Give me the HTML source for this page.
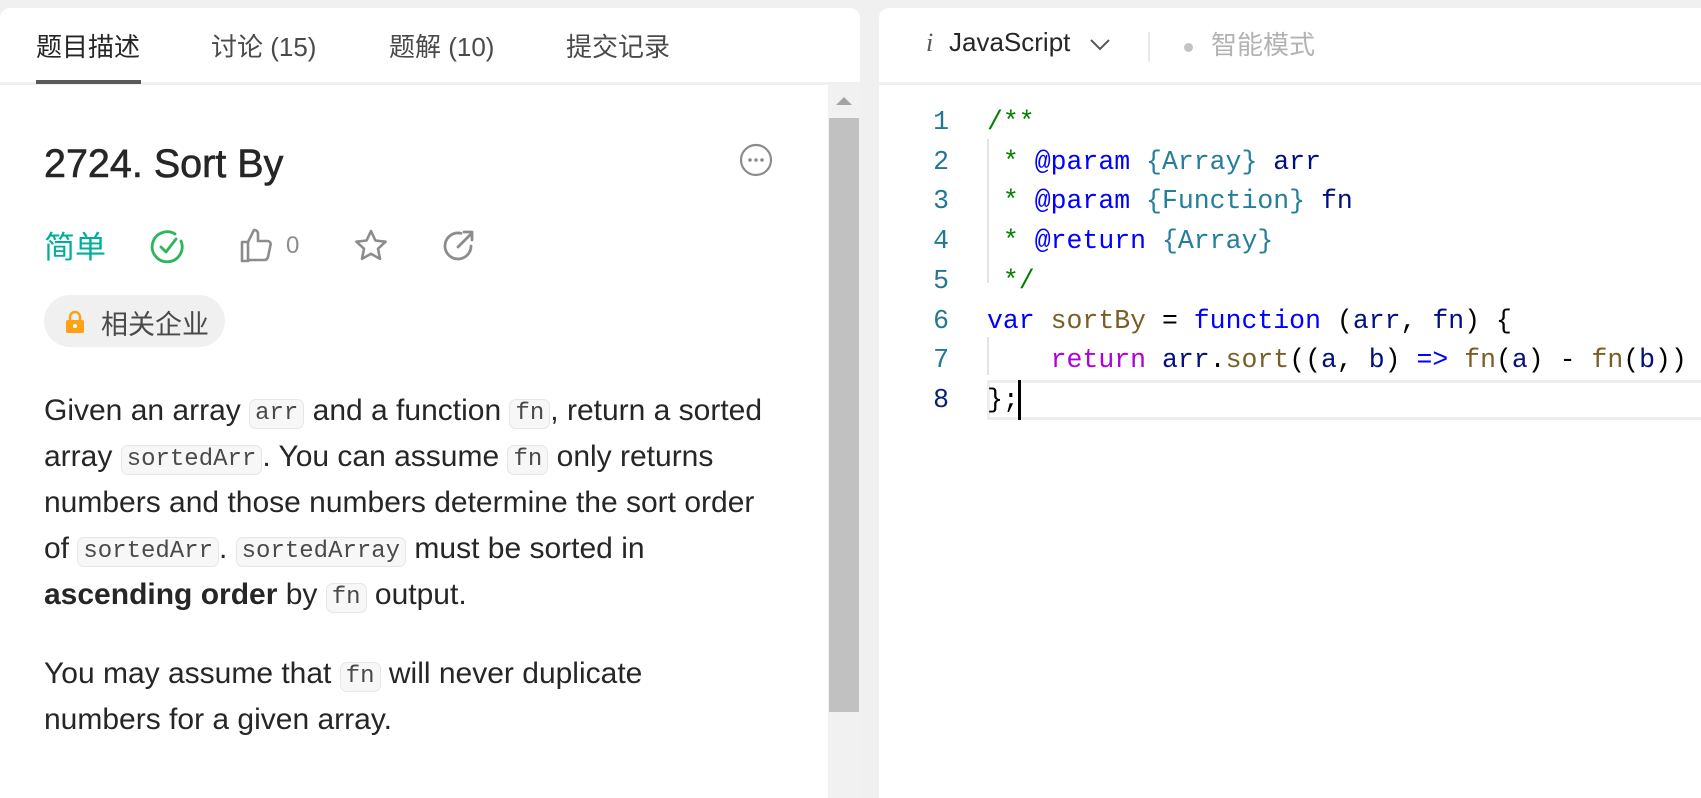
<!DOCTYPE html>
<html><head><meta charset="utf-8"><style>
*{margin:0;padding:0;box-sizing:border-box}
body{width:1701px;height:782px;background:#f0f0f0;overflow:hidden;position:relative;font-family:"Liberation Sans","Noto Sans CJK SC",sans-serif;color:#262626}
.panel{position:absolute;top:8px;background:#fff;border-radius:10px 10px 0 0;overflow:hidden}
#left{left:0;width:860px;height:790px}
#right{left:879px;width:830px;height:790px}
.abs{position:absolute;white-space:nowrap}
.tab{font-size:26px;color:#4a4a4a;top:19px}
.hdrline{position:absolute;left:0;right:0;top:74px;height:3px;background:#f0f0f0}
code{font-family:"Liberation Mono",monospace;font-size:24px;line-height:1;background:#f7f7f7;border:1px solid #e6e6e6;border-radius:7px;padding:2px 5px;color:#4a4a4a;display:inline-block;vertical-align:1px}
.p{position:absolute;left:44px;font-size:30px;line-height:46px;white-space:nowrap;color:#262626}
.ln{position:absolute;left:0;width:70px;text-align:right;font-family:"Liberation Mono",monospace;font-size:26.5px;color:#237893}
.cl{position:absolute;left:108px;font-family:"Liberation Mono",monospace;font-size:26.5px;white-space:pre;color:#001080}
.cm{color:#008000}.kw{color:#0000ff}.ty{color:#267f99}.fn{color:#795e26}.rt{color:#af00db}.tx{color:#000}
</style></head><body>
<div id="left" class="panel">
 <div class="abs tab" style="left:36px;color:#262626">题目描述</div>
 <div class="abs tab" style="left:211px">讨论 (15)</div>
 <div class="abs tab" style="left:389px">题解 (10)</div>
 <div class="abs tab" style="left:566px">提交记录</div>
 <div class="hdrline"></div>
 <div class="abs" style="left:36px;top:72px;width:105px;height:4px;background:#595959"></div>
 <div class="abs" style="left:828px;top:77px;width:32px;height:720px;background:#f1f1f1"></div>
 <div class="abs" style="left:836px;top:89px;width:0;height:0;border-left:8px solid transparent;border-right:8px solid transparent;border-bottom:8px solid #a3a3a3"></div>
 <div class="abs" style="left:829px;top:110px;width:30px;height:594px;background:#c1c1c1"></div>
 <div class="abs" style="left:44px;top:134px;font-size:39.5px;-webkit-text-stroke:0.6px #262626">2724. Sort By</div>
 <svg class="abs" style="left:739px;top:135px" width="34" height="34" viewBox="0 0 34 34"><circle cx="17" cy="17" r="15" fill="none" stroke="#8c8c8c" stroke-width="2.2"/><circle cx="11" cy="17" r="1.8" fill="#8c8c8c"/><circle cx="17" cy="17" r="1.8" fill="#8c8c8c"/><circle cx="23" cy="17" r="1.8" fill="#8c8c8c"/></svg>
 <div class="abs" style="left:44px;top:214px;font-size:31px;color:#00af9b">简单</div>
 <svg class="abs" style="left:150px;top:221px" width="36" height="36" viewBox="0 0 36 36"><path d="M31 12 A15 15 0 1 1 25 5" fill="none" stroke="#2db55d" stroke-width="2.8" stroke-linecap="round"/><path d="M11 18 l5 5 l10 -13" fill="none" stroke="#2db55d" stroke-width="2.8" stroke-linecap="round" stroke-linejoin="round"/></svg>
 <svg class="abs" style="left:239px;top:219px" width="36" height="38" viewBox="0 0 36 38"><path d="M3 15 h6 v19 h-6z M9 15 l6 -12 c3 0 4 2 4 4 v7 h9 c3 0 4 2 3.5 4 l-2.5 12 c-0.5 2 -2 3 -4 3 h-16" fill="none" stroke="#8c8c8c" stroke-width="2.6" stroke-linejoin="round"/></svg>
 <div class="abs" style="left:286px;top:224px;font-size:24px;color:#8c8c8c">0</div>
 <svg class="abs" style="left:353px;top:220px" width="36" height="36" viewBox="0 0 36 36"><path d="M18 3 l4.4 9.5 10.2 1.2 -7.6 7 2 10.2 -9 -5.1 -9 5.1 2 -10.2 -7.6 -7 10.2 -1.2z" fill="none" stroke="#8c8c8c" stroke-width="2.6" stroke-linejoin="round"/></svg>
 <svg class="abs" style="left:441px;top:220px" width="36" height="36" viewBox="0 0 36 36"><path d="M30 18 A13 13 0 1 1 20 5.3" fill="none" stroke="#8c8c8c" stroke-width="2.8" stroke-linecap="round"/><path d="M17 19 L31 5 M23 4 h8 v8" fill="none" stroke="#8c8c8c" stroke-width="2.8" stroke-linecap="round" stroke-linejoin="round"/></svg>
 <div class="abs" style="left:44px;top:287px;width:181px;height:52px;border-radius:26px;background:#f0f0f0"></div>
 <svg class="abs" style="left:65px;top:302px" width="20" height="24" viewBox="0 0 20 24"><path d="M5 11 V7 a5 5 0 0 1 10 0 V11" fill="none" stroke="#ffa116" stroke-width="2.5"/><rect x="1" y="10" width="18" height="13" rx="2" fill="#ffa116"/><circle cx="10" cy="16" r="2" fill="#fff"/></svg>
 <div class="abs" style="left:101px;top:295px;font-size:27px;color:#4a4a4a">相关企业</div>
 <div class="p" style="top:380px">Given an array <code>arr</code> and a function <code>fn</code>, return a sorted<br>array <code>sortedArr</code>. You can assume <code>fn</code> only returns<br>numbers and those numbers determine the sort order<br>of <code>sortedArr</code>. <code>sortedArray</code> must be sorted in<br><b>ascending order</b> by <code>fn</code> output.</div>
 <div class="p" style="top:643px">You may assume that <code>fn</code> will never duplicate<br>numbers for a given array.</div>
</div>
<div id="right" class="panel">
 <div class="abs" style="left:47px;top:20px;font-size:26px;font-style:italic;font-family:'Liberation Serif',serif;color:#595959">i</div>
 <div class="abs" style="left:70px;top:19px;font-size:26px;color:#262626">JavaScript</div>
 <svg class="abs" style="left:210px;top:30px" width="22" height="14" viewBox="0 0 22 14"><path d="M2 2 l9 9 l9 -9" fill="none" stroke="#595959" stroke-width="2"/></svg>
 <div class="abs" style="left:269px;top:24px;width:2px;height:30px;background:#e8e8e8"></div>
 <div class="abs" style="left:305px;top:35px;width:9px;height:9px;border-radius:50%;background:#c4c4c4"></div>
 <div class="abs" style="left:332px;top:17px;font-size:26px;color:#b3b3b3">智能模式</div>
 <div class="hdrline"></div>
 <div class="abs" style="left:108px;top:131px;width:2px;height:144px;background:#e3e3e3"></div>
 <div class="abs" style="left:108px;top:329px;width:2px;height:38px;background:#e3e3e3"></div>
 <div class="abs" style="left:108px;top:372px;width:730px;height:40px;border:3px solid #eeeeee;border-right:none"></div>
 <div class="abs" style="left:139px;top:372px;width:3px;height:40px;background:#000"></div>
 <div class="ln" style="top:99px">1</div><div class="cl cm" style="top:99px">/**</div>
 <div class="ln" style="top:139px">2</div><div class="cl" style="top:139px"><span class="cm"> * </span><span class="kw">@param</span> <span class="ty">{Array}</span> arr</div>
 <div class="ln" style="top:178px">3</div><div class="cl" style="top:178px"><span class="cm"> * </span><span class="kw">@param</span> <span class="ty">{Function}</span> fn</div>
 <div class="ln" style="top:218px">4</div><div class="cl" style="top:218px"><span class="cm"> * </span><span class="kw">@return</span> <span class="ty">{Array}</span></div>
 <div class="ln" style="top:258px">5</div><div class="cl cm" style="top:258px"> */</div>
 <div class="ln" style="top:298px">6</div><div class="cl" style="top:298px"><span class="kw">var</span> <span class="fn">sortBy</span> <span class="tx">=</span> <span class="kw">function</span> <span class="tx">(</span>arr<span class="tx">,</span> fn<span class="tx">) {</span></div>
 <div class="ln" style="top:337px">7</div><div class="cl" style="top:337px">    <span class="rt">return</span> arr<span class="tx">.</span><span class="fn">sort</span><span class="tx">((</span>a<span class="tx">,</span> b<span class="tx">)</span> <span class="kw">=&gt;</span> <span class="fn">fn</span><span class="tx">(</span>a<span class="tx">) -</span> <span class="fn">fn</span><span class="tx">(</span>b<span class="tx">))</span></div>
 <div class="ln" style="top:377px;color:#0b216f">8</div><div class="cl tx" style="top:377px">};</div>
</div>
</body></html>
